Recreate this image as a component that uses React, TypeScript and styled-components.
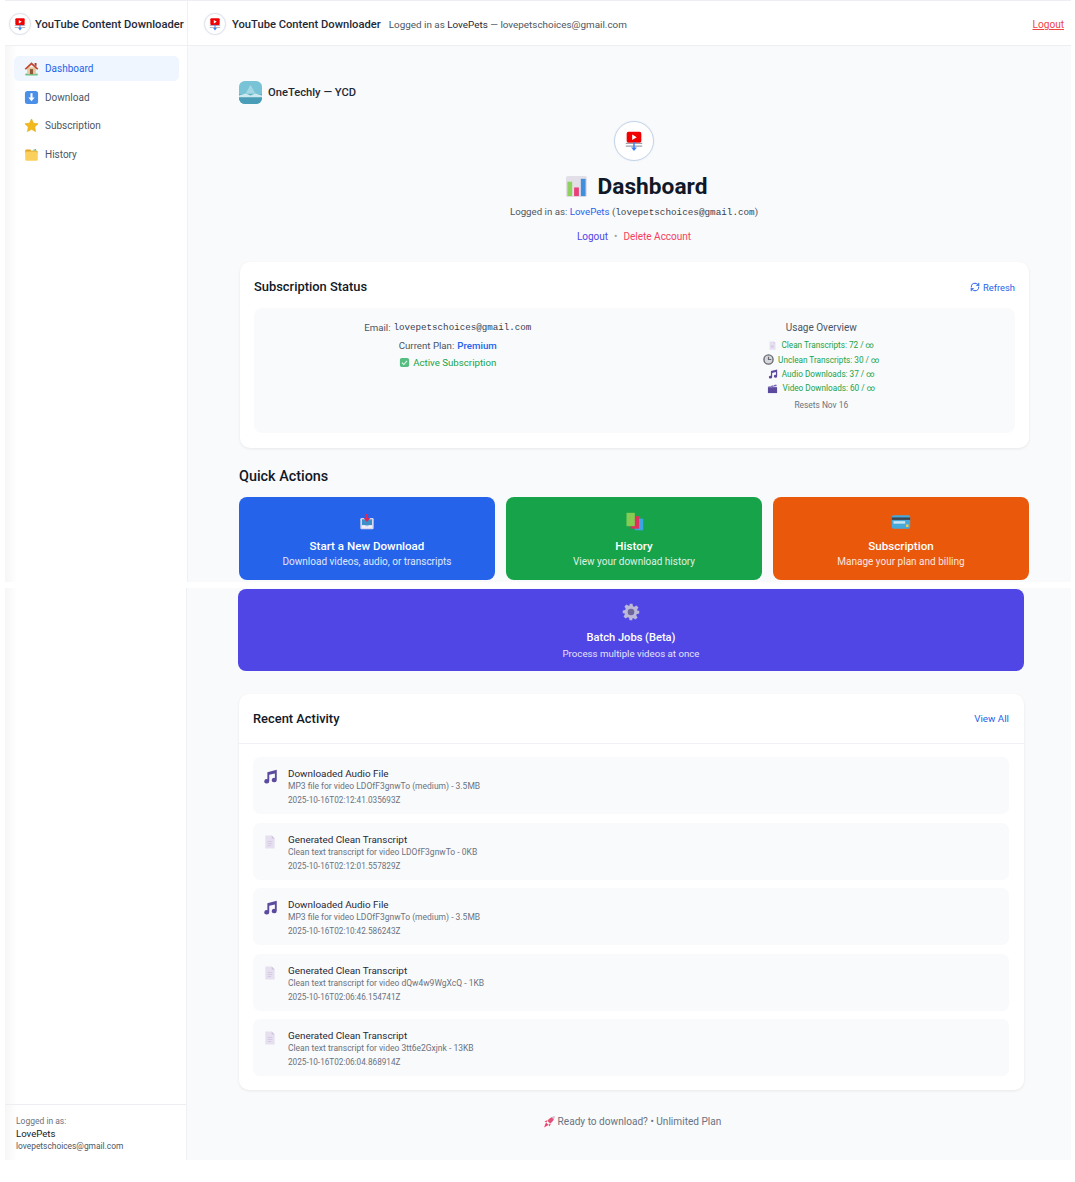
import React from "react";
import styled, { createGlobalStyle } from "styled-components";
import { RefreshCw } from "lucide-react";

const GlobalStyle = createGlobalStyle`
  html, body {
    margin: 0;
    padding: 0;
    background: #ffffff;
    font-family: Roboto, "Noto Sans", "Liberation Sans", sans-serif;
  }
  * {
    box-sizing: border-box;
  }
`;

const Emoji = styled.svg<{ $size: number }>`
  width: ${(p) => p.$size}px;
  height: ${(p) => p.$size}px;
  flex: none;
  display: block;
`;

type IconProps = { size?: number };

function LogoIcon({ size = 16 }: IconProps) {
  return (
    <Emoji $size={size} viewBox="0 0 24 24">
      <rect x="4" y="2" width="16" height="12" rx="2" fill="#f00000" />
      <path d="M10 5l5 3-5 3z" fill="#fff" />
      <path d="M3 14h18v1.4H3zM3 17h18v1.4H3z" fill="#9ca3af" />
      <path d="M11.2 13h1.6v6h2.4L12 23l-3.2-4h2.4z" fill="#3b82f6" />
    </Emoji>
  );
}

function HouseIcon({ size = 15 }: IconProps) {
  return (
    <Emoji $size={size} viewBox="0 0 24 24">
      <rect x="2" y="20" width="20" height="3" rx="1" fill="#6fbf8a" />
      <rect x="5" y="10" width="14" height="11" fill="#e8c9a0" />
      <path d="M12 2L1 12.5l2 1.6L12 6l9 8.1 2-1.6z" fill="#c2492f" />
      <path d="M17 3h3v6l-3-2.6z" fill="#a83c2a" />
      <rect x="9.5" y="13" width="5" height="8" fill="#8a5a3a" />
    </Emoji>
  );
}

function DownloadIcon({ size = 15 }: IconProps) {
  return (
    <Emoji $size={size} viewBox="0 0 24 24">
      <rect x="1.5" y="1.5" width="21" height="21" rx="4" fill="#4a90e8" />
      <path d="M10.4 5h3.2v7h3.4L12 18l-5-6h3.4z" fill="#fff" />
    </Emoji>
  );
}

function StarIcon({ size = 15 }: IconProps) {
  return (
    <Emoji $size={size} viewBox="0 0 24 24">
      <path
        d="M12 1.5l3.2 6.8 7.3.9-5.4 5.1 1.4 7.4L12 18.1l-6.5 3.6 1.4-7.4L1.5 9.2l7.3-.9z"
        fill="#f2b91c"
        stroke="#e6a80f"
        strokeWidth="1"
        strokeLinejoin="round"
      />
    </Emoji>
  );
}

function FolderIcon({ size = 15 }: IconProps) {
  return (
    <Emoji $size={size} viewBox="0 0 24 24">
      <path d="M2 6a2 2 0 012-2h6l2 2h8a2 2 0 012 2v2H2z" fill="#e0a526" />
      <path d="M13 5l6-2 1 3z" fill="#6fae5a" />
      <rect x="2" y="7" width="20" height="15" rx="2" fill="#fbcf5c" />
    </Emoji>
  );
}

function ChartIcon({ size = 23 }: IconProps) {
  return (
    <Emoji $size={size} viewBox="0 0 24 24">
      <rect x="1" y="1" width="22" height="22" rx="2" fill="#e3dfe8" />
      <rect x="2.5" y="7" width="5" height="15" fill="#8ed15e" />
      <rect x="9.5" y="13" width="5" height="9" fill="#e8407a" />
      <rect x="16.5" y="4" width="5" height="18" fill="#3f8fdc" />
    </Emoji>
  );
}

function TileIcon({ size = 14 }: IconProps) {
  return (
    <Emoji $size={size} viewBox="0 0 24 24">
      <rect x="2" y="2" width="20" height="20" rx="4" fill="#56bd80" />
      <path d="M6.5 12.5l4 4 7-8" fill="none" stroke="#e8f8ee" strokeWidth="2.4" />
    </Emoji>
  );
}

function PageIcon({ size = 14 }: IconProps) {
  return (
    <Emoji $size={size} viewBox="0 0 24 24">
      <path d="M4 1h11l5 5v17H4z" fill="#e6dff0" />
      <path d="M15 1l5 5h-5z" fill="#cfc4de" />
      <path d="M8 11h8v1.2H8zM8 14h8v1.2H8zM8 17h6v1.2H8z" fill="#c2b6d4" />
    </Emoji>
  );
}

function NotesIcon({ size = 14 }: IconProps) {
  return (
    <Emoji $size={size} viewBox="0 0 24 24">
      <path
        d="M7 5L22 1v16.5a4 3.5 0 11-3-3.3V7L10 9.3v10.2a4 3.5 0 11-3-3.3z"
        fill="#5b4a9e"
      />
    </Emoji>
  );
}

function ClockIcon({ size = 11 }: IconProps) {
  return (
    <Emoji $size={size} viewBox="0 0 24 24">
      <circle cx="12" cy="12" r="10" fill="#d8d7dc" stroke="#666a72" strokeWidth="3" />
      <path d="M12 6v6h6" fill="none" stroke="#666a72" strokeWidth="2.6" />
    </Emoji>
  );
}

function ClapperIcon({ size = 11 }: IconProps) {
  return (
    <Emoji $size={size} viewBox="0 0 24 24">
      <rect x="2" y="9" width="20" height="13" fill="#5b4a9e" />
      <path d="M2 8l18-5 1.5 3.5L3 10.5z" fill="#7a68b8" />
      <path d="M7 6.6l2.6 2.4M13 5l2.6 2.4" stroke="#e9e6f4" strokeWidth="1.6" />
    </Emoji>
  );
}

function InboxIcon({ size = 16 }: IconProps) {
  return (
    <Emoji $size={size} viewBox="0 0 24 24">
      <rect x="2" y="6" width="20" height="17" rx="2" fill="#d8d6ee" />
      <rect x="4.5" y="8" width="15" height="9" fill="#3c8fc8" />
      <path d="M4.5 17H9l1.5 2h3l1.5-2h4.5v3.5h-15z" fill="#f2f1fa" />
      <path d="M10.4 0h3.2v6H17l-5 6-5-6h3.4z" fill="#d42a5c" />
    </Emoji>
  );
}

function BooksIcon({ size = 20 }: IconProps) {
  return (
    <Emoji $size={size} viewBox="0 0 24 24">
      <rect x="13" y="8" width="10" height="14" fill="#3aa5e0" />
      <rect x="8" y="5" width="10" height="15" fill="#e0305f" />
      <rect x="3" y="1" width="10" height="16" fill="#86cc52" />
    </Emoji>
  );
}

function CardIcon({ size = 20 }: IconProps) {
  return (
    <Emoji $size={size} viewBox="0 0 24 24">
      <rect x="1" y="4" width="22" height="16" rx="2" fill="#46a9dc" />
      <rect x="1" y="6.5" width="22" height="3" fill="#3d4650" />
      <rect x="3" y="11" width="14" height="3" fill="#cfe6f2" />
      <rect x="18" y="15" width="3" height="3" fill="#f2c94c" />
    </Emoji>
  );
}

function GearIcon({ size = 18 }: IconProps) {
  return (
    <Emoji $size={size} viewBox="0 0 24 24">
      <path
        d="M10 1h4l.6 3.2 1.9.8 2.7-1.8 2.8 2.8-1.8 2.7.8 1.9L23 10v4l-3.2.6-.8 1.9 1.8 2.7-2.8 2.8-2.7-1.8-1.9.8L14 23h-4l-.6-3.2-1.9-.8-2.7 1.8-2.8-2.8 1.8-2.7-.8-1.9L1 14v-4l3.2-.6.8-1.9-1.8-2.7 2.8-2.8 2.7 1.8 1.9-.8z"
        fill="#bcb8d8"
      />
      <circle cx="12" cy="12" r="4.4" fill="#6e679c" />
    </Emoji>
  );
}

function RocketIcon({ size = 12 }: IconProps) {
  return (
    <Emoji $size={size} viewBox="0 0 24 24">
      <path d="M23 1c-7 .5-11 4-14 9l5 5c5-3 8.500-7 9-14z" fill="#e4507a" />
      <path d="M23 1c-2.500.2-4 .8-5.500 1.800l3.700 3.700C22.200 5 22.800 3.500 23 1z" fill="#c9ccd6" />
      <path d="M9 8L3 11l4 2zM16 15l-3 6-2-4z" fill="#ef4a5e" />
      <path d="M6 13l5 5-9 5z" fill="#ee3f73" />
    </Emoji>
  );
}

function BrandMark() {
  return (
    <Emoji $size={23} viewBox="0 0 24 24">
      <rect width="24" height="24" rx="6" fill="#79c3d6" />
      <path d="M0 14h24v4a6 6 0 01-6 6H6a6 6 0 01-6-6z" fill="#4a9db6" />
      <path d="M12 4l5 9H7z" fill="#a3d7e4" />
      <path d="M0 15l7-2 5 2 5-2 7 2v2H0z" fill="#cce9f0" />
    </Emoji>
  );
}

const Capture = styled.div<{ $height: number; $width: number }>`
  display: flex;
  width: ${(p) => p.$width}px;
  height: ${(p) => p.$height}px;
  margin-left: 5px;
`;

const Sidebar = styled.aside<{ $width: number }>`
  width: ${(p) => p.$width}px;
  flex: none;
  display: flex;
  flex-direction: column;
  justify-content: space-between;
  background: linear-gradient(to right, #f6f6f6, #ffffff 12px);
  border-right: 1px solid #f0f1f4;
`;

const BrandBar = styled.div`
  height: 46px;
  display: flex;
  align-items: center;
  gap: 4px;
  padding: 2px 0 0 4px;
  background: #ffffff;
  border-top: 1px solid #eceef1;
  border-bottom: 1px solid #eff0f3;
`;

const LogoCircle = styled.span<{ $size: number; $ring: string }>`
  width: ${(p) => p.$size}px;
  height: ${(p) => p.$size}px;
  flex: none;
  border-radius: 50%;
  background: #ffffff;
  border: 1px solid ${(p) => p.$ring};
  box-shadow: 0 0 2px rgba(0, 0, 0, 0.08);
  display: flex;
  align-items: center;
  justify-content: center;
`;

const BrandName = styled.span`
  font-size: 11.2px;
  font-weight: 500;
  color: #1f2937;
  white-space: nowrap;
`;

const Nav = styled.nav`
  padding: 10px 8px 0 9px;
  display: flex;
  flex-direction: column;
  gap: 3.7px;
`;

const NavItem = styled.a<{ $active?: boolean }>`
  height: 25px;
  border-radius: 5px;
  padding-left: 10px;
  display: flex;
  align-items: center;
  gap: 6px;
  font-size: 10px;
  color: ${(p) => (p.$active ? "#2563eb" : "#4b5563")};
  background: ${(p) => (p.$active ? "#eff6ff" : "transparent")};
`;

const SideFooter = styled.div`
  height: 56px;
  padding: 10px 0 0 11px;
  border-top: 1px solid #eceef1;
  line-height: 12px;
`;

const SideLabel = styled.div`
  font-size: 8.5px;
  color: #6b7280;
`;

const SideName = styled.div`
  font-size: 9.6px;
  line-height: 13px;
  color: #111827;
`;

const SideMail = styled.div`
  font-size: 8.4px;
  color: #4b5563;
`;

const Main = styled.main`
  flex: 1;
  min-width: 0;
  background: #f9fafb;
  display: flex;
  flex-direction: column;
`;

const TopBar = styled.header`
  height: 46px;
  background: #ffffff;
  border-top: 1px solid #eceef1;
  border-bottom: 1px solid #eceef1;
  display: flex;
  align-items: center;
  padding: 2px 7px 0 16px;
`;

const TopBrand = styled(BrandName)`
  margin-left: 6px;
`;

const TopUser = styled.span`
  margin-left: 8px;
  font-size: 9.9px;
  color: #4b5563;
  white-space: nowrap;
`;

const Strong = styled.span`
  color: #1f2937;
`;

const TopLogout = styled.a`
  margin-left: auto;
  font-size: 10.1px;
  color: #ef4444;
  text-decoration: underline;
`;

const Content = styled.div<{ $right: number }>`
  padding: 0 ${(p) => p.$right}px 0 51px;
`;

const BrandRow = styled.div`
  margin-top: 35px;
  display: flex;
  align-items: center;
  gap: 6px;
  height: 23px;
`;

const BrandText = styled.span`
  font-size: 11.2px;
  font-weight: 500;
  color: #1f2937;
`;

const Hero = styled.div`
  margin-top: 17px;
  display: flex;
  flex-direction: column;
  align-items: center;
`;

const Title = styled.h1`
  margin: 10px 0 0;
  padding-left: 4px;
  height: 30px;
  display: flex;
  align-items: center;
  gap: 10px;
  font-size: 22.7px;
  font-weight: 700;
  color: #111827;
`;

const HeroLine = styled.div`
  margin-top: 4px;
  font-size: 9.7px;
  line-height: 14px;
  color: #4b5563;
`;

const BlueText = styled.span`
  color: #2563eb;
`;

const Mono = styled.span<{ $size: number }>`
  font-family: "Liberation Mono", "DejaVu Sans Mono", monospace;
  font-size: ${(p) => p.$size}px;
  color: #374151;
`;

const HeroLinks = styled.div`
  margin-top: 10px;
  display: flex;
  align-items: center;
  gap: 6px;
  font-size: 10px;
  line-height: 14px;
  color: #9ca3af;
`;

const HeroLink = styled.a<{ $color: string }>`
  color: ${(p) => p.$color};
`;

const Card = styled.section`
  background: #ffffff;
  border-radius: 10px;
  box-shadow: 0 1px 3px rgba(17, 24, 39, 0.08);
`;

const StatusCard = styled(Card)`
  margin: 18px 0 0 1px;
  height: 186px;
  padding: 15px 14px 0;
`;

const CardHead = styled.div`
  display: flex;
  align-items: center;
  justify-content: space-between;
`;

const CardTitle = styled.h2`
  margin: 0;
  font-size: 12.9px;
  line-height: 20px;
  font-weight: 500;
  color: #111827;
`;

const RefreshLink = styled.a`
  display: flex;
  align-items: center;
  gap: 3px;
  font-size: 9.4px;
  color: #2563eb;
`;

const StatusPanel = styled.div`
  margin-top: 11px;
  height: 125px;
  border-radius: 8px;
  background: #f9fafb;
  padding: 12px 14px;
  display: grid;
  grid-template-columns: 1fr 1fr;
  gap: 14px;
`;

const StatusCol = styled.div`
  display: flex;
  flex-direction: column;
  align-items: center;
  font-size: 9.7px;
  color: #4b5563;
`;

const StatusLine = styled.div<{ $gap?: number }>`
  height: 14px;
  margin-bottom: ${(p) => p.$gap ?? 0}px;
  display: flex;
  align-items: center;
  gap: 3px;
  white-space: nowrap;
`;

const UsageTitle = styled(StatusLine)`
  font-size: 10px;
`;

const PlanName = styled.span`
  color: #2563eb;
  font-weight: 500;
`;

const ActiveText = styled.span`
  color: #16a34a;
`;

const UsageLine = styled.div`
  height: 14.4px;
  display: flex;
  align-items: center;
  gap: 4px;
  font-size: 8.2px;
  color: #16a34a;
  white-space: nowrap;
`;

const Resets = styled.div`
  margin-top: 2px;
  font-size: 8.4px;
  line-height: 14px;
  color: #6b7280;
`;

const SectionTitle = styled.h2`
  margin: 19px 0 0;
  font-size: 14.4px;
  line-height: 20px;
  font-weight: 500;
  color: #111827;
`;

const ActionGrid = styled.div`
  margin-top: 10px;
  display: grid;
  grid-template-columns: repeat(3, 1fr);
  gap: 11px;
`;

const ActionCard = styled.a<{ $bg: string }>`
  height: 83px;
  border-radius: 8px;
  background: ${(p) => p.$bg};
  color: #ffffff;
  display: flex;
  flex-direction: column;
  align-items: center;
  justify-content: flex-start;
`;

const ActionIcon = styled.div<{ $top: number }>`
  margin-top: ${(p) => p.$top}px;
  height: 18px;
  display: flex;
  align-items: center;
`;

const ActionTitle = styled.div<{ $top: number; $size: number }>`
  margin-top: ${(p) => p.$top}px;
  font-size: ${(p) => p.$size}px;
  line-height: 14px;
  font-weight: 500;
`;

const ActionText = styled.div<{ $top: number; $size: number }>`
  margin-top: ${(p) => p.$top}px;
  font-size: ${(p) => p.$size}px;
  line-height: 14px;
  opacity: 0.85;
`;

const Gap = styled.div`
  height: 6px;
`;

const BatchCard = styled(ActionCard)`
  margin-top: 1px;
  height: 82px;
`;

const ActivityCard = styled(Card)`
  margin: 23px 0 0 1px;
  height: 396px;
`;

const ActivityHead = styled(CardHead)`
  height: 50px;
  padding: 0 15px 0 14px;
  border-bottom: 1px solid #f0f1f4;
`;

const ViewAll = styled.a`
  font-size: 9.8px;
  color: #2563eb;
`;

const ActivityList = styled.div`
  padding: 13px 15px 0 14px;
  display: flex;
  flex-direction: column;
  gap: 8.5px;
`;

const ActivityRow = styled.div`
  height: 57px;
  border-radius: 7px;
  background: #f9fafb;
  padding: 10px 10px 0;
  display: flex;
  gap: 10px;
`;

const ActivityIconBox = styled.div`
  width: 15px;
  padding-top: 2px;
`;

const ActivityTitle = styled.div`
  font-size: 9.9px;
  line-height: 13px;
  color: #1f2937;
`;

const ActivityText = styled.div`
  font-size: 8.5px;
  line-height: 12px;
  color: #6b7280;
`;

const ActivityDate = styled.div`
  margin-top: 2px;
  font-size: 8.2px;
  line-height: 12px;
  color: #6b7280;
`;

const FootNote = styled.div`
  margin-top: 25px;
  margin-left: 2px;
  display: flex;
  justify-content: center;
  align-items: center;
  gap: 3px;
  font-size: 10.1px;
  line-height: 14px;
  color: #6b7280;
`;

const navItems = [
  { label: "Dashboard", icon: <HouseIcon />, active: true },
  { label: "Download", icon: <DownloadIcon /> },
  { label: "Subscription", icon: <StarIcon /> },
  { label: "History", icon: <FolderIcon /> },
];

const usage = [
  { label: "Clean Transcripts: 72 / ∞", icon: <PageIcon size={9} /> },
  { label: "Unclean Transcripts: 30 / ∞", icon: <ClockIcon /> },
  { label: "Audio Downloads: 37 / ∞", icon: <NotesIcon size={10} /> },
  { label: "Video Downloads: 60 / ∞", icon: <ClapperIcon /> },
];

const actions = [
  { title: "Start a New Download", text: "Download videos, audio, or transcripts", bg: "#2563eb", icon: <InboxIcon /> },
  { title: "History", text: "View your download history", bg: "#16a34a", icon: <BooksIcon /> },
  { title: "Subscription", text: "Manage your plan and billing", bg: "#ea580c", icon: <CardIcon /> },
];

const activity = [
  { kind: "audio", title: "Downloaded Audio File", text: "MP3 file for video LDOfF3gnwTo (medium) - 3.5MB", date: "2025-10-16T02:12:41.035693Z" },
  { kind: "doc", title: "Generated Clean Transcript", text: "Clean text transcript for video LDOfF3gnwTo - 0KB", date: "2025-10-16T02:12:01.557829Z" },
  { kind: "audio", title: "Downloaded Audio File", text: "MP3 file for video LDOfF3gnwTo (medium) - 3.5MB", date: "2025-10-16T02:10:42.586243Z" },
  { kind: "doc", title: "Generated Clean Transcript", text: "Clean text transcript for video dQw4w9WgXcQ - 1KB", date: "2025-10-16T02:06:46.154741Z" },
  { kind: "doc", title: "Generated Clean Transcript", text: "Clean text transcript for video 3tt6e2Gxjnk - 13KB", date: "2025-10-16T02:06:04.868914Z" },
];

export default function App() {
  return (
    <>
      <GlobalStyle />
      <Capture $width={1066} $height={582}>
        <Sidebar $width={183}>
          <div>
            <BrandBar>
              <LogoCircle $size={22} $ring="#dde3ee">
                <LogoIcon size={14} />
              </LogoCircle>
              <BrandName>YouTube Content Downloader</BrandName>
            </BrandBar>
            <Nav>
              {navItems.map((item) => (
                <NavItem key={item.label} $active={item.active}>
                  {item.icon}
                  {item.label}
                </NavItem>
              ))}
            </Nav>
          </div>
        </Sidebar>
        <Main>
          <TopBar>
            <LogoCircle $size={22} $ring="#dde3ee">
              <LogoIcon size={14} />
            </LogoCircle>
            <TopBrand>YouTube Content Downloader</TopBrand>
            <TopUser>
              Logged in as <Strong>LovePets</Strong> — lovepetschoices@gmail.com
            </TopUser>
            <TopLogout>Logout</TopLogout>
          </TopBar>
          <Content $right={42}>
            <BrandRow>
              <BrandMark />
              <BrandText>OneTechly — YCD</BrandText>
            </BrandRow>
            <Hero>
              <LogoCircle $size={40} $ring="#c3d5ee">
                <LogoIcon size={22} />
              </LogoCircle>
              <Title>
                <ChartIcon />
                Dashboard
              </Title>
              <HeroLine>
                Logged in as: <BlueText>LovePets</BlueText> (<Mono $size={9.3}>lovepetschoices@gmail.com</Mono>)
              </HeroLine>
              <HeroLinks>
                <HeroLink $color="#4f46e5">Logout</HeroLink>•<HeroLink $color="#f43f5e">Delete Account</HeroLink>
              </HeroLinks>
            </Hero>
            <StatusCard>
              <CardHead>
                <CardTitle>Subscription Status</CardTitle>
                <RefreshLink>
                  <RefreshCw size={10} strokeWidth={2.4} />
                  Refresh
                </RefreshLink>
              </CardHead>
              <StatusPanel>
                <StatusCol>
                  <StatusLine $gap={4}>
                    Email:
                    <Mono $size={9.2}>lovepetschoices@gmail.com</Mono>
                  </StatusLine>
                  <StatusLine $gap={3.5}>
                    Current Plan:
                    <PlanName>Premium</PlanName>
                  </StatusLine>
                  <StatusLine>
                    <TileIcon size={11} />
                    <ActiveText>Active Subscription</ActiveText>
                  </StatusLine>
                </StatusCol>
                <StatusCol>
                  <UsageTitle $gap={4}>Usage Overview</UsageTitle>
                  {usage.map((row) => (
                    <UsageLine key={row.label}>
                      {row.icon}
                      {row.label}
                    </UsageLine>
                  ))}
                  <Resets>Resets Nov 16</Resets>
                </StatusCol>
              </StatusPanel>
            </StatusCard>
            <SectionTitle>Quick Actions</SectionTitle>
            <ActionGrid>
              {actions.map((a) => (
                <ActionCard key={a.title} $bg={a.bg}>
                  <ActionIcon $top={16}>{a.icon}</ActionIcon>
                  <ActionTitle $top={8} $size={11.6}>
                    {a.title}
                  </ActionTitle>
                  <ActionText $top={2} $size={10}>
                    {a.text}
                  </ActionText>
                </ActionCard>
              ))}
            </ActionGrid>
          </Content>
        </Main>
      </Capture>
      <Gap />
      <Capture $width={1066} $height={572}>
        <Sidebar $width={182}>
          <div />
          <SideFooter>
            <SideLabel>Logged in as:</SideLabel>
            <SideName>LovePets</SideName>
            <SideMail>lovepetschoices@gmail.com</SideMail>
          </SideFooter>
        </Sidebar>
        <Main>
          <Content $right={47}>
            <BatchCard $bg="#4f46e5">
              <ActionIcon $top={14}>
                <GearIcon />
              </ActionIcon>
              <ActionTitle $top={10} $size={11.1}>
                Batch Jobs (Beta)
              </ActionTitle>
              <ActionText $top={2} $size={9.7}>
                Process multiple videos at once
              </ActionText>
            </BatchCard>
            <ActivityCard>
              <ActivityHead>
                <CardTitle>Recent Activity</CardTitle>
                <ViewAll>View All</ViewAll>
              </ActivityHead>
              <ActivityList>
                {activity.map((row) => (
                  <ActivityRow key={row.date}>
                    <ActivityIconBox>{row.kind === "audio" ? <NotesIcon size={15} /> : <PageIcon />}</ActivityIconBox>
                    <div>
                      <ActivityTitle>{row.title}</ActivityTitle>
                      <ActivityText>{row.text}</ActivityText>
                      <ActivityDate>{row.date}</ActivityDate>
                    </div>
                  </ActivityRow>
                ))}
              </ActivityList>
            </ActivityCard>
            <FootNote>
              <RocketIcon />
              Ready to download? • Unlimited Plan
            </FootNote>
          </Content>
        </Main>
      </Capture>
    </>
  );
}
